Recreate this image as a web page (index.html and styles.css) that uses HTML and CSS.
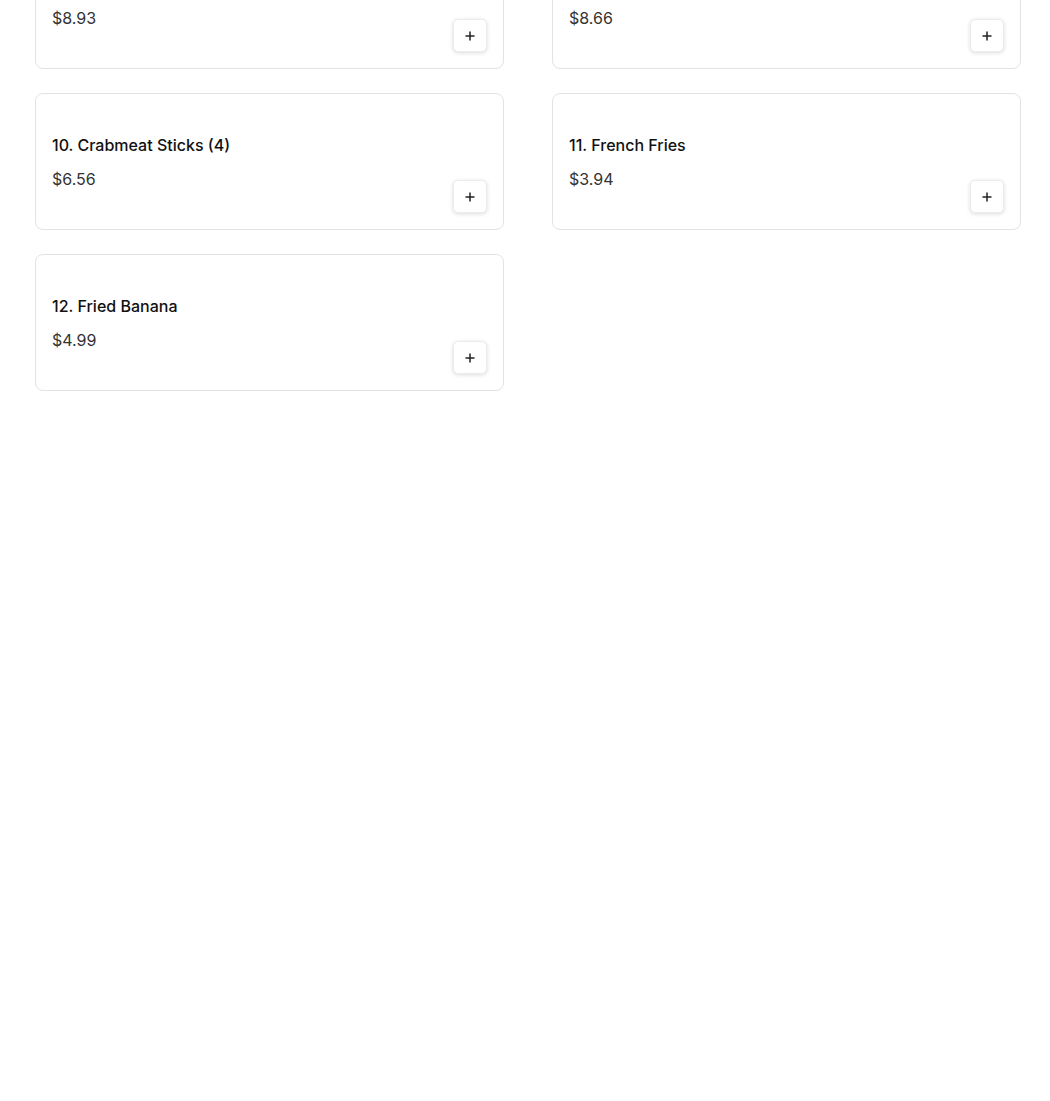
FILE: index.html
```html
<!DOCTYPE html>
<html lang="en">
<head>
    <meta charset="UTF-8">
    <meta name="viewport" content="width=device-width, initial-scale=1.0">
    <title>Menu</title>
    <link rel="stylesheet" href="styles.css">
</head>
<body>

<div class="menu">
    <div class="menu-grid">
        <div class="item-card">
            <div class="item-info">
                <div class="item-name">8. Egg Rolls (2)</div>
                <div class="item-price">$8.93</div>
            </div>
            <button class="add-btn" aria-label="Add">
                <svg width="12" height="12" viewBox="0 0 12 12"><path d="M6 1.5v9M1.5 6h9" stroke="#222" stroke-width="1.5" fill="none"/></svg>
            </button>
        </div>
        <div class="item-card">
            <div class="item-info">
                <div class="item-name">9. Chicken Wings (6)</div>
                <div class="item-price">$8.66</div>
            </div>
            <button class="add-btn" aria-label="Add">
                <svg width="12" height="12" viewBox="0 0 12 12"><path d="M6 1.5v9M1.5 6h9" stroke="#222" stroke-width="1.5" fill="none"/></svg>
            </button>
        </div>
        <div class="item-card">
            <div class="item-info">
                <div class="item-name">10. Crabmeat Sticks (4)</div>
                <div class="item-price">$6.56</div>
            </div>
            <button class="add-btn" aria-label="Add">
                <svg width="12" height="12" viewBox="0 0 12 12"><path d="M6 1.5v9M1.5 6h9" stroke="#222" stroke-width="1.5" fill="none"/></svg>
            </button>
        </div>
        <div class="item-card">
            <div class="item-info">
                <div class="item-name">11. French Fries</div>
                <div class="item-price">$3.94</div>
            </div>
            <button class="add-btn" aria-label="Add">
                <svg width="12" height="12" viewBox="0 0 12 12"><path d="M6 1.5v9M1.5 6h9" stroke="#222" stroke-width="1.5" fill="none"/></svg>
            </button>
        </div>
        <div class="item-card">
            <div class="item-info">
                <div class="item-name">12. Fried Banana</div>
                <div class="item-price">$4.99</div>
            </div>
            <button class="add-btn" aria-label="Add">
                <svg width="12" height="12" viewBox="0 0 12 12"><path d="M6 1.5v9M1.5 6h9" stroke="#222" stroke-width="1.5" fill="none"/></svg>
            </button>
        </div>
    </div>
</div>

</body>
</html>
```

FILE: styles.css
```css
body {
    font-family: Inter, "Open Sans", Arial, sans-serif;
    margin: 0;
    padding: 0;
    background-color: #fff;
    color: #111;
}

.menu {
    padding: 0 29px 0 35px;
    overflow: hidden;
}

.menu-grid {
    display: grid;
    grid-template-columns: repeat(2, 1fr);
    column-gap: 48px;
    row-gap: 24px;
    margin-top: -68px;
}

.item-card {
    display: flex;
    box-sizing: border-box;
    min-height: 137px;
    padding: 16px;
    border: 1px solid #e3e3e3;
    border-radius: 8px;
    background-color: #fff;
}

.item-info {
    flex-grow: 1;
    align-self: center;
    display: flex;
    flex-direction: column;
    gap: 10px;
}

.item-name {
    font-size: 16px;
    line-height: 24px;
    font-weight: 500;
    color: #111;
}

.item-price {
    font-size: 16px;
    line-height: 24px;
    color: #333;
}

.add-btn {
    align-self: flex-end;
    width: 34px;
    height: 33px;
    padding: 0;
    display: flex;
    align-items: center;
    justify-content: center;
    background-color: #fff;
    border: 1px solid #ececec;
    border-radius: 5px;
    box-shadow: 0 1px 4px rgba(0, 0, 0, 0.14);
    cursor: pointer;
}
```
